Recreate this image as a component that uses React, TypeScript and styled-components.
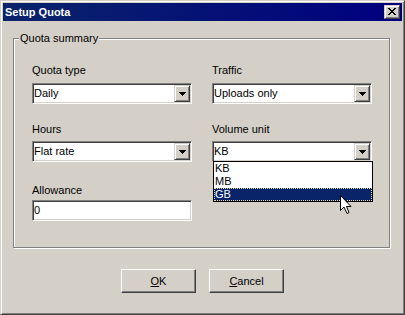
import React, { ReactElement } from 'react'
import styled, { createGlobalStyle } from 'styled-components';

const GlobalStyle = createGlobalStyle`
  html, body {
    margin: 0;
    padding: 0;
    background: #d4d0c8;
  }
  body {
    font-family: "Liberation Sans", Arial, sans-serif;
    font-size: 11px;
    color: #000;
  }
`;

const Window = styled.div`
  position: relative;
  width: 405px;
  height: 315px;
  box-sizing: border-box;
  padding: 2px;
  background: #d4d0c8;
  border: 1px solid;
  border-color: #d4d0c8 #404040 #404040 #d4d0c8;
  box-shadow: inset 1px 1px 0 #fff, inset -1px -1px 0 #808080;
  display: flex;
  flex-direction: column;
`;

const TitleBar = styled.div`
  height: 18px;
  display: flex;
  align-items: center;
  justify-content: space-between;
  background: linear-gradient(to right, #0a246a, #000080);
`;

const Title = styled.span`
  padding-left: 2px;
  color: #fff;
  font-weight: bold;
  font-size: 11px;
  line-height: 18px;
`;

const CloseButton = styled.div`
  width: 16px;
  height: 14px;
  margin-right: 2px;
  box-sizing: border-box;
  display: flex;
  align-items: center;
  justify-content: center;
  padding: 0 1px 1px 0;
  background: #d4d0c8;
  border: 1px solid;
  border-color: #d4d0c8 #404040 #404040 #d4d0c8;
  box-shadow: inset 1px 1px 0 #fff, inset -1px -1px 0 #808080;
`;

const GroupBox = styled.div`
  position: relative;
  margin: 17px 0 0 10px;
  width: 377px;
  height: 210px;
  box-sizing: border-box;
  padding: 25px 0 0 18px;
  border: 1px solid #808080;
  box-shadow: 1px 1px 0 #fff, inset 1px 1px 0 #fff;
`;

const Legend = styled.span`
  position: absolute;
  top: -7px;
  left: 5px;
  padding: 0 1px;
  line-height: 13px;
  background: #d4d0c8;
`;

const FormGrid = styled.div`
  display: grid;
  grid-template-columns: 160px 160px;
  column-gap: 20px;
  align-items: start;
`;

const Field = styled.div<{ $top: number; $gap: number }>`
  display: flex;
  flex-direction: column;
  margin-top: ${p => p.$top}px;
  gap: ${p => p.$gap}px;
`;

const Label = styled.label`
  line-height: 13px;
  height: 13px;
`;

const Sunken = styled.div`
  position: relative;
  width: 160px;
  height: 21px;
  box-sizing: border-box;
  padding: 1px 1px 1px 0;
  display: flex;
  align-items: stretch;
  background: #fff;
  border: 1px solid;
  border-color: #808080 #fff #fff #808080;
  box-shadow: inset 1px 1px 0 #404040, inset -1px -1px 0 #d4d0c8;
`;

const Value = styled.span`
  flex: 1;
  padding-left: 1px;
  line-height: 17px;
  white-space: nowrap;
`;

const DropButton = styled.div`
  width: 16px;
  height: 17px;
  box-sizing: border-box;
  display: flex;
  align-items: center;
  justify-content: center;
  background: #d4d0c8;
  border: 1px solid;
  border-color: #d4d0c8 #404040 #404040 #d4d0c8;
  box-shadow: inset 1px 1px 0 #fff, inset -1px -1px 0 #808080;
`;

const ListBox = styled.ul`
  position: absolute;
  top: 100%;
  left: 0;
  width: 160px;
  margin: 0;
  padding: 0;
  list-style: none;
  box-sizing: border-box;
  border: 1px solid #000;
  background: #fff;
  z-index: 2;
`;

const ListItem = styled.li<{ $selected?: boolean }>`
  height: 13px;
  line-height: 13px;
  padding-left: 1px;
  color: ${p => (p.$selected ? '#fff' : '#000')};
  background: ${p => (p.$selected ? '#0a246a' : 'transparent')};
  outline: ${p => (p.$selected ? '1px dotted #f5db95' : 'none')};
  outline-offset: -1px;
`;

const ButtonRow = styled.div`
  display: flex;
  justify-content: center;
  gap: 13px;
  margin-top: 21px;
`;

const Button = styled.button`
  width: 75px;
  height: 24px;
  box-sizing: border-box;
  padding: 0;
  font-family: inherit;
  font-size: 11px;
  color: #000;
  background: #d4d0c8;
  border: 1px solid;
  border-color: #fff #404040 #404040 #fff;
  box-shadow: inset -1px -1px 0 #808080;
`;

const Cursor = styled.svg`
  position: absolute;
  left: 338px;
  top: 193px;
  pointer-events: none;
  z-index: 5;
`;

const closePixels = [
  [0, 0], [1, 0], [6, 0], [7, 0],
  [1, 1], [2, 1], [5, 1], [6, 1],
  [2, 2], [3, 2], [4, 2], [5, 2],
  [3, 3], [4, 3],
  [2, 4], [3, 4], [4, 4], [5, 4],
  [1, 5], [2, 5], [5, 5], [6, 5],
  [0, 6], [1, 6], [6, 6], [7, 6],
];

const CloseGlyph = () => (
  <svg width="8" height="7" viewBox="0 0 8 7" shapeRendering="crispEdges">
    {closePixels.map(([x, y]) => (
      <rect key={`${x}-${y}`} x={x} y={y} width="1" height="1" fill="#000" />
    ))}
  </svg>
);

const Arrow = () => (
  <svg width="7" height="4" viewBox="0 0 7 4" shapeRendering="crispEdges">
    <rect x="0" y="0" width="7" height="1" fill="#000" />
    <rect x="1" y="1" width="5" height="1" fill="#000" />
    <rect x="2" y="2" width="3" height="1" fill="#000" />
    <rect x="3" y="3" width="1" height="1" fill="#000" />
  </svg>
);

interface ComboProps {
  value: string
  children?: React.ReactNode
}

function Combo({ value, children }: ComboProps): ReactElement {
  return (
    <Sunken>
      <Value>{value}</Value>
      <DropButton>
        <Arrow />
      </DropButton>
      {children}
    </Sunken>
  );
}

const units = ['KB', 'MB', 'GB'];

export default function App(): ReactElement {
  return (
    <>
      <GlobalStyle />
      <Window>
        <TitleBar>
          <Title>Setup Quota</Title>
          <CloseButton>
            <CloseGlyph />
          </CloseButton>
        </TitleBar>

        <GroupBox>
          <Legend>Quota summary</Legend>
          <FormGrid>
            <Field $top={0} $gap={6}>
              <Label>Quota type</Label>
              <Combo value="Daily" />
            </Field>
            <Field $top={0} $gap={6}>
              <Label>Traffic</Label>
              <Combo value="Uploads only" />
            </Field>
            <Field $top={19} $gap={5}>
              <Label>Hours</Label>
              <Combo value="Flat rate" />
            </Field>
            <Field $top={19} $gap={5}>
              <Label>Volume unit</Label>
              <Combo value="KB">
                <ListBox>
                  {units.map(u => (
                    <ListItem key={u} $selected={u === 'GB'}>{u}</ListItem>
                  ))}
                </ListBox>
              </Combo>
            </Field>
            <Field $top={22} $gap={3}>
              <Label>Allowance</Label>
              <Sunken>
                <Value>0</Value>
              </Sunken>
            </Field>
          </FormGrid>
        </GroupBox>

        <ButtonRow>
          <Button><u>O</u>K</Button>
          <Button><u>C</u>ancel</Button>
        </ButtonRow>

        <Cursor width="13" height="21" viewBox="0 0 13 21">
          <path
            d="M1.5 1.5 V16.5 L5 13 L8 19.5 L10 18.5 L7.5 12.5 H12 Z"
            fill="#fff"
            stroke="#000"
            strokeWidth="1"
            strokeLinejoin="miter"
          />
        </Cursor>
      </Window>
    </>
  );
}
